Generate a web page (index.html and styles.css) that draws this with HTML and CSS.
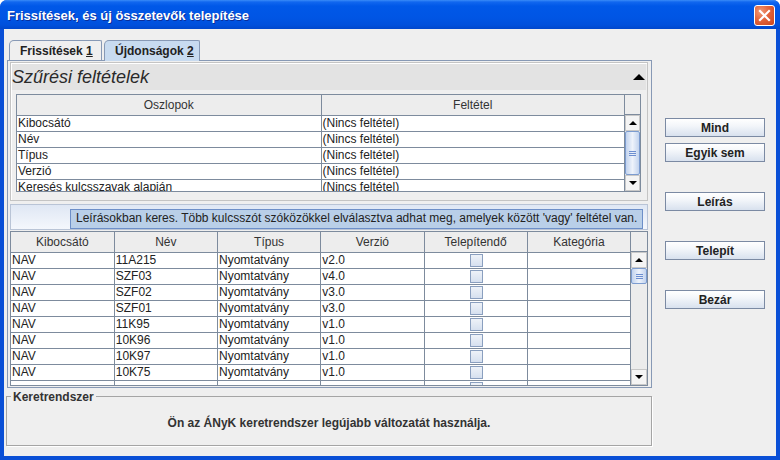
FILE: index.html
```html
<!DOCTYPE html>
<html lang="hu">
<head>
<meta charset="utf-8">
<title>Frissítések</title>
<link rel="stylesheet" href="styles.css">
</head>
<body>
<div class="window">
  <div class="titlebar">
    <span class="title">Frissítések, és új összetevők telepítése</span>
    <span class="close"><svg width="13" height="13" viewBox="0 0 13 13"><path d="M2 2 L11 11 M11 2 L2 11" stroke="#fff" stroke-width="2.2" stroke-linecap="square"/></svg></span>
  </div>
  <div class="content">
    <div class="main">
      <div class="tabs">
        <div class="tab">Frissítések <u>1</u></div>
        <div class="tab active">Újdonságok <u>2</u></div>
      </div>
      <div class="tabpanel">
        <div class="filter">
          <div class="filter-head"><span>Szűrési feltételek</span><span class="tri-up"></span></div>
          <div class="filter-body">
            <div class="scrollpane ftable">
              <div class="tablewrap">
                <table>
                  <colgroup><col class="fc1"><col></colgroup>
                  <thead><tr><th>Oszlopok</th><th>Feltétel</th></tr></thead>
                  <tbody>
                    <tr><td>Kibocsátó</td><td>(Nincs feltétel)</td></tr>
                    <tr><td>Név</td><td>(Nincs feltétel)</td></tr>
                    <tr><td>Típus</td><td>(Nincs feltétel)</td></tr>
                    <tr><td>Verzió</td><td>(Nincs feltétel)</td></tr>
                    <tr><td>Keresés kulcsszavak alapján</td><td>(Nincs feltétel)</td></tr>
                  </tbody>
                </table>
              </div>
              <div class="vscroll">
                <div class="corner"></div>
                <div class="sbtn"><span class="ar-up"></span></div>
                <div class="thumb long"><span class="grip"></span></div>
                <div class="sbtn"><span class="ar-down"></span></div>
              </div>
            </div>
          </div>
        </div>
        <div class="hintbar"><div class="hint">Leírásokban keres. Több kulcsszót szóközökkel elválasztva adhat meg, amelyek között 'vagy' feltétel van.</div></div>
        <div class="scrollpane mtable">
          <div class="tablewrap">
            <table>
              <colgroup><col><col><col><col><col><col></colgroup>
              <thead><tr><th>Kibocsátó</th><th>Név</th><th>Típus</th><th>Verzió</th><th>Telepítendő</th><th>Kategória</th></tr></thead>
              <tbody>
                <tr><td>NAV</td><td>11A215</td><td>Nyomtatvány</td><td>v2.0</td><td class="cb"><span class="check"></span></td><td></td></tr>
                <tr><td>NAV</td><td>SZF03</td><td>Nyomtatvány</td><td>v4.0</td><td class="cb"><span class="check"></span></td><td></td></tr>
                <tr><td>NAV</td><td>SZF02</td><td>Nyomtatvány</td><td>v3.0</td><td class="cb"><span class="check"></span></td><td></td></tr>
                <tr><td>NAV</td><td>SZF01</td><td>Nyomtatvány</td><td>v3.0</td><td class="cb"><span class="check"></span></td><td></td></tr>
                <tr><td>NAV</td><td>11K95</td><td>Nyomtatvány</td><td>v1.0</td><td class="cb"><span class="check"></span></td><td></td></tr>
                <tr><td>NAV</td><td>10K96</td><td>Nyomtatvány</td><td>v1.0</td><td class="cb"><span class="check"></span></td><td></td></tr>
                <tr><td>NAV</td><td>10K97</td><td>Nyomtatvány</td><td>v1.0</td><td class="cb"><span class="check"></span></td><td></td></tr>
                <tr><td>NAV</td><td>10K75</td><td>Nyomtatvány</td><td>v1.0</td><td class="cb"><span class="check"></span></td><td></td></tr>
                <tr class="clipped"><td></td><td></td><td></td><td></td><td class="cb"><span class="check"></span></td><td></td></tr>
              </tbody>
            </table>
          </div>
          <div class="vscroll">
            <div class="corner"></div>
            <div class="sbtn"><span class="ar-up"></span></div>
            <div class="thumb"><span class="grip"></span></div>
            <div class="track"></div>
            <div class="sbtn"><span class="ar-down"></span></div>
          </div>
        </div>
      </div>
      <div class="framework">
        <span class="legend">Keretrendszer</span>
        <p>Ön az ÁNyK keretrendszer legújabb változatát használja.</p>
      </div>
    </div>
    <div class="buttons">
      <button class="btn">Mind</button>
      <button class="btn">Egyik sem</button>
      <button class="btn gap">Leírás</button>
      <button class="btn gap">Telepít</button>
      <button class="btn gap">Bezár</button>
    </div>
  </div>
</div>
</body>
</html>
```

FILE: styles.css
```css
* { box-sizing: border-box; }
html, body { margin: 0; padding: 0; background: #ffffff; }
body { font-family: "Liberation Sans", Arial, sans-serif; font-size: 12px; color: #222; }

.window {
  width: 780px; height: 460px;
  background: #0a4fd6;
  display: flex; flex-direction: column;
  border-radius: 7px 7px 0 0;
  overflow: hidden;
}
.titlebar {
  height: 29px; flex: none;
  background: linear-gradient(#3a8cf8 0, #1167ef 2px, #0058e8 6px, #0055e4 18px, #0050dc 25px, #0047cc 29px);
  display: flex; align-items: center; justify-content: space-between;
  padding: 1px 5px 0 7px;
}
.title {
  color: #fff; font-weight: bold; font-size: 13px;
  text-shadow: 1px 1px 0 #0a2e9a;
}
.close {
  width: 21px; height: 21px;
  border: 1px solid #fff; border-radius: 3px;
  background: radial-gradient(circle at 30% 30%, #f09a78 0, #e2643c 45%, #c9441c 100%);
  display: flex; align-items: center; justify-content: center;
}
.content {
  flex: 1; margin: 0 4px 4px 4px;
  background: #efefef;
  display: flex;
  padding: 11px 0 0 3px;
}
.main { width: 645px; display: flex; flex-direction: column; }

.tabs { display: flex; height: 20px; padding-left: 2px; gap: 2px; position: relative; z-index: 1; }
.tab {
  height: 20px; padding: 3px 10px 0 10px;
  border: 1px solid #8799b5; border-bottom: none;
  border-radius: 5px 2px 0 0;
  font-weight: bold; color: #222; background: #efefef;
  width: 93px; white-space: nowrap;
}
.tab.active { background: #c8dbf0; height: 21px; width: 96px; }
.tab u { text-decoration: underline; }

.tabpanel {
  height: 328px; border: 1px solid #8799b5;
  padding: 1px 3px 0 2px;
  display: flex; flex-direction: column;
}
.filter {
  height: 139px; border: 1px solid #c4c4c4;
  box-shadow: inset 1px 1px 0 #fff;
  display: flex; flex-direction: column;
}
.filter-head {
  height: 26px; margin: 1px 1px 0 1px;
  background: #e3e3e3;
  display: flex; align-items: center; justify-content: space-between;
  padding: 0;
  font-style: italic; font-size: 18px; color: #2a2a2a;
}
.tri-up {
  width: 0; height: 0; margin-right: 1px;
  border-left: 6px solid transparent; border-right: 6px solid transparent;
  border-bottom: 6px solid #000;
}
.filter-body { padding: 4px 6px 0 5px; }

.scrollpane { display: flex; border: 1px solid #7d8b9d; background: #fff; overflow: hidden; }
.tablewrap { flex: 1; overflow: hidden; min-width: 0; }
.scrollpane table { border-collapse: collapse; table-layout: fixed; width: 100%; }
.scrollpane th {
  height: 20px; font-weight: normal; background: #ededed; color: #333;
  border-right: 1px solid #7d8b9d; border-bottom: 1px solid #7d8b9d;
  padding: 0; text-align: center; font-size: 12px;
}
.scrollpane td {
  height: 16px; padding: 0 0 0 1px; white-space: nowrap; overflow: hidden;
  border-right: 1px solid #7d8b9d; border-bottom: 1px solid #7d8b9d;
  font-size: 12px; color: #222; line-height: 14px;
}
.ftable { height: 98px; }
.fc1 { width: 304px; }
.vscroll { width: 15px; flex: none; display: flex; flex-direction: column; background: #ededed; }
.corner { height: 20px; border-bottom: 1px solid #7d8b9d; background: #ededed; flex: none; }
.sbtn {
  height: 16px; flex: none; background: #f4f4f4; border: 1px solid #c8c8c8;
  display: flex; align-items: center; justify-content: center;
}
.ar-up { width: 0; height: 0; border-left: 4px solid transparent; border-right: 4px solid transparent; border-bottom: 4px solid #000; }
.ar-down { width: 0; height: 0; border-left: 4px solid transparent; border-right: 4px solid transparent; border-top: 4px solid #000; }
.thumb {
  height: 16px; flex: none; border: 1px solid #7c9cd0; border-radius: 2px;
  background: linear-gradient(90deg, #c2d3ee, #eef3fb 50%, #c2d3ee);
  display: flex; align-items: center; justify-content: center;
}
.thumb.long { flex: 1; }
.grip { width: 7px; height: 5px; border-top: 1px solid #6c8ed0; border-bottom: 1px solid #6c8ed0; position: relative; }
.grip::after { content: ""; position: absolute; left: 0; right: 0; top: 1px; border-top: 1px solid #6c8ed0; }
.track { flex: 1; background: #ececec; }

.hintbar {
  height: 26px; margin-top: 3px;
  border: 1px solid #b9c4d6;
  background: linear-gradient(#dfe7f4, #f4f7fc);
  padding: 4px 4px 0 59px;
}
.hint {
  height: 20px; background: #b9cfe8; border: 1px solid #6d8fc8;
  padding: 1px 0 0 5px; white-space: nowrap; font-size: 12px; color: #222;
}
.mtable { height: 155px; margin-top: 1px; }
.mtable .vscroll { width: 16px; }
.cb { text-align: center; }
.check {
  display: inline-block; width: 13px; height: 13px; vertical-align: middle;
  border: 1px solid #8a9fbf; background: linear-gradient(#eef2f8, #d6e0ef);
  margin-top: -1px;
}
.clipped td { vertical-align: top; padding-top: 1px; }

.framework {
  margin: 8px 0 0 -1px; height: 50px;
  border: 1px solid #a5a5a5; position: relative;
  box-shadow: 1px 1px 0 #fff;
}
.legend {
  position: absolute; top: -7px; left: 4px; padding: 0 2px;
  background: #efefef; font-weight: bold; color: #333;
}
.framework p { margin: 19px 0 0 0; text-align: center; font-weight: bold; color: #333; }

.buttons { width: 124px; padding: 78px 11px 0 13px; display: flex; flex-direction: column; gap: 6px; }
.btn {
  width: 100px; height: 19px; padding: 0;
  border: 1px solid #7b8aa3; border-radius: 0;
  background: linear-gradient(#ffffff, #f3f6fa 40%, #d8e1ee);
  font-family: "Liberation Sans", Arial, sans-serif; font-size: 12px; font-weight: bold; color: #222;
}
.btn.gap { margin-top: 24px; }
```
